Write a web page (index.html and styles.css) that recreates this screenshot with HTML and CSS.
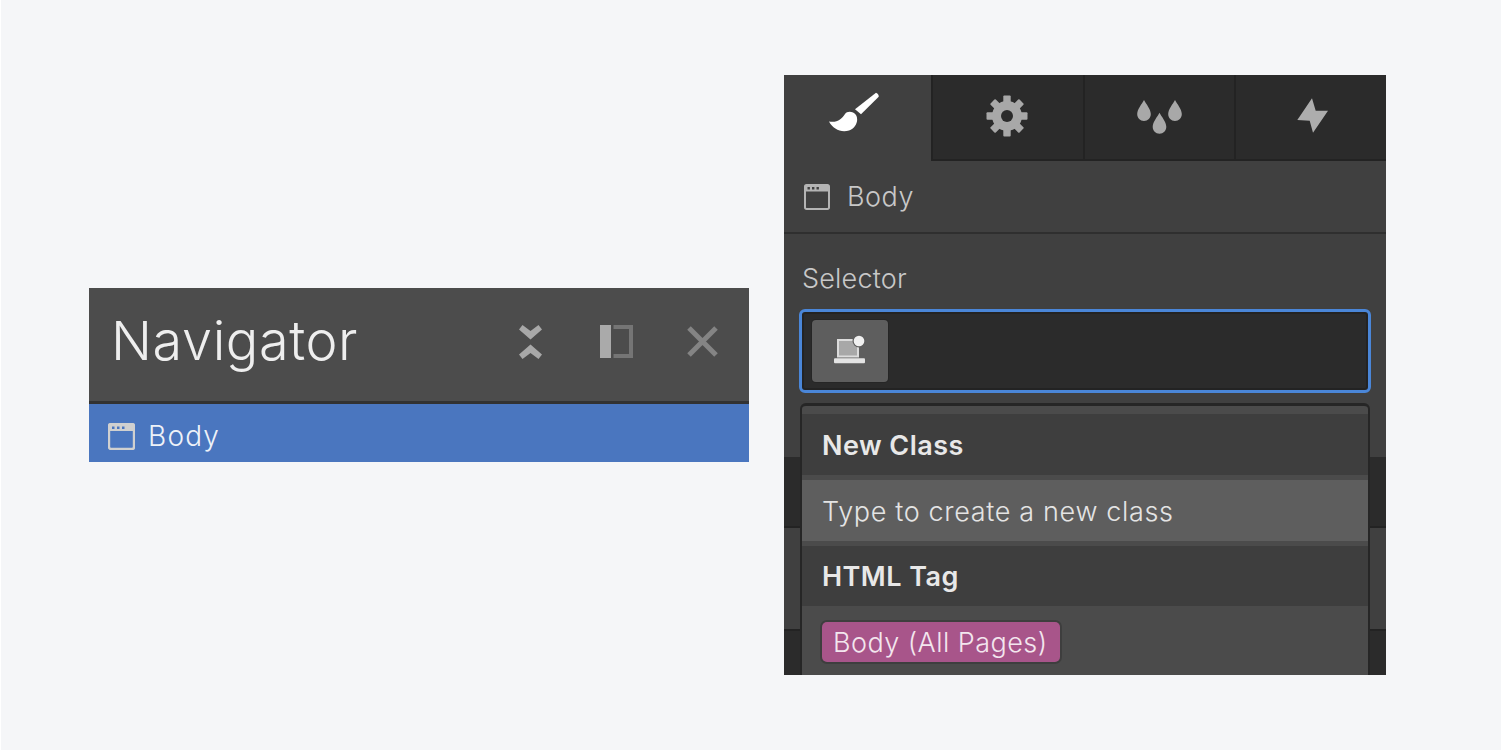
FILE: index.html
```html
<!DOCTYPE html>
<html lang="en">
<head>
<meta charset="utf-8">
<title>Navigator and Selector</title>
<link rel="stylesheet" href="styles.css">
</head>
<body>
<main class="stage">
  <section class="nav">
    <header class="nav-head">
      <h1 class="nav-title">Navigator</h1>
      <div class="nav-actions">
        <svg class="ico-collapse" width="23" height="34" viewBox="0 0 23 34"><path d="M3.500 0L11.500 6 19.500 0 23 4.500 11.500 14.500 0 4.500zM3.500 34L11.500 28 19.500 34 23 29.500 11.500 19.500 0 29.500z" fill="#a8a8a8"/></svg>
        <svg class="ico-side" width="33" height="33" viewBox="0 0 33 33"><rect x="0" y="0" width="11" height="33" fill="#aaa"/><path d="M13.500 2H31V31H13.500" fill="none" stroke="#757575" stroke-width="4"/></svg>
        <svg class="ico-close" width="31" height="31" viewBox="0 0 31 31"><path d="M2 2l27 27M29 2L2 29" fill="none" stroke="#848484" stroke-width="5"/></svg>
      </div>
    </header>
    <div class="nav-row">
      <svg class="ico-window" width="27" height="27" viewBox="0 0 27 27"><path d="M1 3a2 2 0 0 1 2-2h21a2 2 0 0 1 2 2v21a2 2 0 0 1-2 2H3a2 2 0 0 1-2-2z" fill="none" stroke="#d0d0d0" stroke-width="2.400"/><rect x="1" y="1" width="25" height="7" fill="#d0d0d0"/><path d="M4 3.500h2.500v2.500H4zM9 3.500h2.500v2.500H9zM14 3.500h2.500v2.500H14z" fill="#4a76bf"/></svg>
      <span class="nav-label">Body</span>
    </div>
  </section>

  <section class="panel">
    <nav class="tabs">
      <div class="tab tab-active">
        <svg width="50" height="40" viewBox="0 0 50 40"><path d="M26 17.300l6 5L49.700 4.700Q50 2 47 .7z" fill="#fff"/><path d="M0 29.500C8 31 13 27 16 22 18 19 24 19 27 23 30 28 27 36 20 38.500 12 41 4 37 0 29.500z" fill="#fff"/></svg>
      </div>
      <div class="tab">
        <svg class="ico-gear" width="42" height="42" viewBox="-21 -21 42 42"><g fill="#a8a8a8"><rect x="-3.700" y="-20.500" width="7.400" height="41" rx="1"/><rect x="-3.700" y="-20.500" width="7.400" height="41" rx="1" transform="rotate(45)"/><rect x="-3.700" y="-20.500" width="7.400" height="41" rx="1" transform="rotate(90)"/><rect x="-3.700" y="-20.500" width="7.400" height="41" rx="1" transform="rotate(135)"/><circle r="15"/></g><circle r="6" fill="#2b2b2b"/></svg>
      </div>
      <div class="tab">
        <svg class="ico-drops" width="46" height="34" viewBox="0 0 46 34"><path d="M7 0C9 4 13.800 9 13.800 14 13.800 18 10.800 21 7 21S.2 18 .2 14C.2 9 5 4 7 0z" fill="#a8a8a8"/><path d="M22.500 12.700C24.500 16.700 29.300 21.700 29.300 26.700 29.300 30.700 26.300 33.700 22.500 33.700S15.700 30.700 15.700 26.700C15.700 21.700 20.500 16.700 22.500 12.700z" fill="#a8a8a8"/><path d="M38 0C40 4 44.800 9 44.800 14 44.800 18 41.800 21 38 21S31.200 18 31.200 14C31.200 9 36 4 38 0z" fill="#a8a8a8"/></svg>
      </div>
      <div class="tab">
        <svg class="ico-bolt" width="31" height="35" viewBox="0 0 31 35"><path d="M15 .3L.3 22 12.700 22.700 16 34.700 31 12.700 18.700 12.700z" fill="#adadad"/></svg>
      </div>
    </nav>
    <div class="element-row">
      <svg width="26" height="26" viewBox="0 0 26 26"><path d="M1 2.500a1.500 1.500 0 0 1 1.500-1.500h21a1.500 1.500 0 0 1 1.500 1.500v21a1.500 1.500 0 0 1-1.500 1.500h-21a1.500 1.500 0 0 1-1.500-1.500z" fill="none" stroke="#b4b4b4" stroke-width="2"/><rect x="1" y="1" width="24" height="6.500" fill="#b4b4b4"/><path d="M3.500 3h2.400v2.400H3.500zM8 3h2.400v2.400H8zM12.500 3h2.400v2.400h-2.400z" fill="#404040"/></svg>
      <span class="element-label">Body</span>
    </div>
    <div class="selector">
      <label class="selector-label">Selector</label>
      <div class="selector-input">
        <div class="chip">
          <svg width="32" height="32" viewBox="0 0 32 32"><rect x="4" y="5" width="20" height="16.500" fill="#a8a8a8" stroke="#dcdcdc" stroke-width="2"/><rect y="23.300" width="31" height="5" rx="1" fill="#e4e4e4"/><circle cx="25" cy="6" r="6.500" fill="#5e5e5e"/><circle cx="25" cy="6" r="5.300" fill="#f0f0f0"/></svg>
        </div>
      </div>
    </div>
    <div class="band band-dark"></div>
    <div class="band band-light"></div>
    <div class="band band-rest"></div>

    <div class="menu">
      <div class="menu-head">New Class</div>
      <div class="menu-hint">Type to create a new class</div>
      <div class="menu-head menu-head-tag">HTML Tag</div>
      <div class="menu-tag"><span class="pill">Body (All Pages)</span></div>
    </div>
  </section>
</main>
</body>
</html>
```
FILE: styles.css
```css
* { box-sizing: border-box; }
html, body { margin: 0; height: 100%; }
body {
  background: #ffffff;
  font-family: "Inter", "Liberation Sans", sans-serif;
  overflow: hidden;
}
.stage {
  height: 750px;
  margin-left: 1px;
  background: #f5f6f8;
  display: flex;
  align-items: center;
  gap: 35px;
  padding-left: 88px;
}
.nav {
  width: 660px;
  height: 174px;
  display: flex;
  flex-direction: column;
  flex: none;
}
.nav-head {
  height: 116px;
  background: #4c4c4c;
  border-bottom: 3px solid #323232;
  display: flex;
  align-items: center;
  justify-content: space-between;
  padding: 0 31px 6px 22px;
}
.nav-title {
  margin: 0 0 1px;
  font-size: 54px;
  font-weight: 350;
  letter-spacing: 0.6px;
  line-height: 1;
  color: #eeeeee;
}
.nav-actions {
  display: flex;
  align-items: center;
  gap: 54px;
}
.nav-actions svg { display: block; }
.ico-collapse { margin-right: 4px; }
.nav-row {
  flex: 1;
  background: #4a76bf;
  display: flex;
  align-items: center;
  gap: 13px;
  padding: 6px 0 0 19px;
}
.nav-label {
  font-size: 28px;
  font-weight: 350;
  letter-spacing: 1.2px;
  color: #eef2f8;
}
.panel {
  position: relative;
  width: 602px;
  height: 600px;
  flex: none;
  background: #404040;
  display: flex;
  flex-direction: column;
}
.tabs {
  height: 86px;
  display: flex;
  flex: none;
}
.tab {
  flex: 1;
  display: flex;
  align-items: center;
  justify-content: center;
  padding-bottom: 3px;
  background: #2b2b2b;
  border-bottom: 2px solid #232323;
  border-left: 2px solid #232323;
}
.tab-active {
  flex: 0 0 147px;
  background: #404040;
  border: 0;
  padding: 0 7px 12px 0;
}
.ico-gear { margin-right: 2px; }
.ico-drops { margin-top: 2px; }
.ico-bolt { margin-left: 2px; }
.element-row {
  height: 73px;
  flex: none;
  display: flex;
  align-items: center;
  gap: 17px;
  padding-left: 20px;
  border-bottom: 2px solid #2f2f2f;
}
.element-label {
  font-size: 27px;
  font-weight: 350;
  letter-spacing: 0.5px;
  color: #c8c8c8;
}
.selector {
  height: 223px;
  flex: none;
  padding: 29px 15px 0;
}
.selector-label {
  display: block;
  margin: 0 0 14px 3px;
  font-size: 27px;
  font-weight: 350;
  letter-spacing: 0.2px;
  line-height: 32px;
  color: #c8c8c8;
}
.selector-input {
  height: 84px;
  background: #2b2b2b;
  border: 3px solid #4a86d8;
  border-radius: 6px;
  box-shadow: inset 0 0 0 2px #232323;
  padding: 8px 0 0 10px;
}
.chip {
  width: 76px;
  height: 62px;
  background: #5e5e5e;
  border-radius: 4px;
  box-shadow: 0 0 0 1px #262626;
  display: flex;
  align-items: center;
  justify-content: center;
}
.band { flex: none; }
.band-dark {
  height: 71px;
  background: #2b2b2b;
  border-bottom: 2px solid #232323;
}
.band-light {
  height: 103px;
  background: #404040;
  border-bottom: 2px solid #232323;
}
.band-rest {
  flex: 1;
  background: #2b2b2b;
}
.menu {
  position: absolute;
  left: 16px;
  right: 16px;
  top: 328px;
  bottom: 0;
  background: #4b4b4b;
  border: solid #262626;
  border-width: 3px 2px 0;
  border-radius: 6px 6px 0 0;
  padding-top: 8px;
  display: flex;
  flex-direction: column;
}
.menu-head {
  height: 61px;
  flex: none;
  background: #3e3e3e;
  display: flex;
  align-items: center;
  padding: 2px 0 0 20px;
  font-size: 27px;
  font-weight: 600;
  letter-spacing: 0.45px;
  color: #e8e8e8;
}
.menu-hint {
  height: 61px;
  flex: none;
  margin: 5px 0;
  background: #5e5e5e;
  display: flex;
  align-items: center;
  padding: 1px 0 0 20px;
  font-size: 27px;
  font-weight: 350;
  letter-spacing: 0.65px;
  color: #e4e4e4;
}
.menu-head-tag { height: 60px; padding-top: 1px; }
.menu-tag {
  padding: 16px 0 0 20px;
}
.pill {
  display: inline-flex;
  align-items: center;
  height: 40px;
  padding: 0 12px 0 11px;
  background: #a8558a;
  border-radius: 5px;
  box-shadow: 0 0 0 2px #3e3e3e;
  font-size: 27px;
  font-weight: 350;
  letter-spacing: 0.45px;
  color: #f3e6ee;
}
```
